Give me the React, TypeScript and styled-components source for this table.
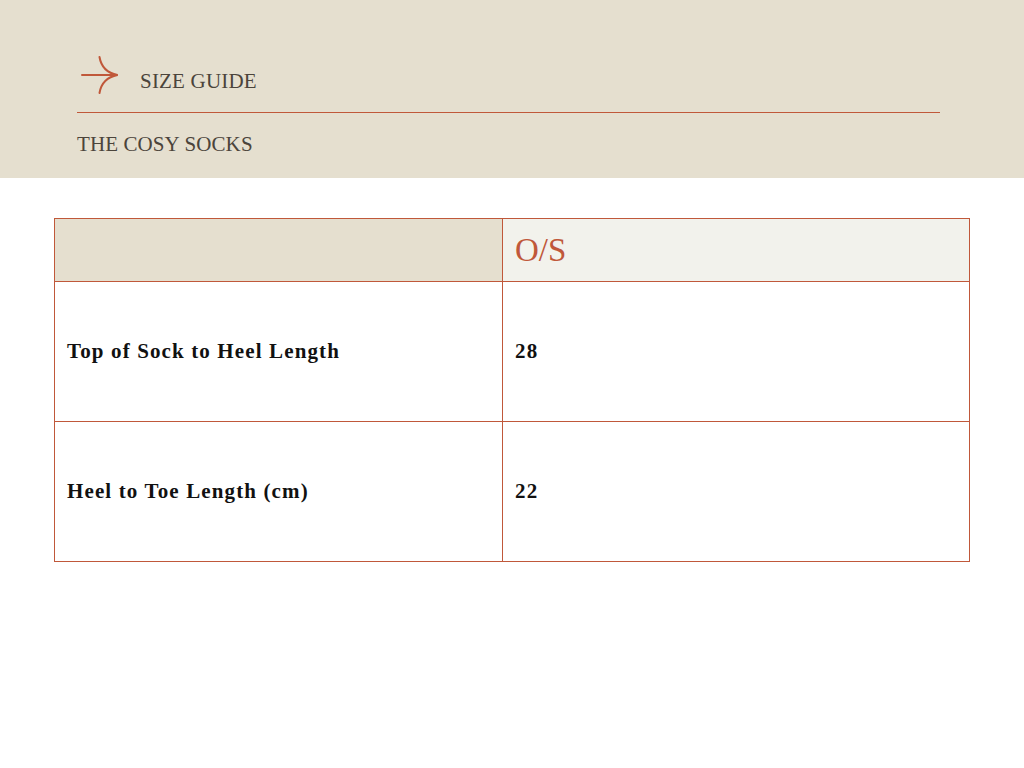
import styled, { createGlobalStyle } from 'styled-components';

const GlobalStyle = createGlobalStyle`
    body {
        margin: 0;
        background: #ffffff;
        font-family: "Liberation Serif", "Times New Roman", serif;
    }
`;

const Header = styled.header`
    box-sizing: border-box;
    height: 178px;
    padding: 55px 84px 0 77px;
    background: #e5dfcf;
`;

const TitleRow = styled.div`
    display: flex;
    align-items: flex-start;
    height: 40px;
    padding-left: 3px;
`;

const Title = styled.div`
    margin-top: 16px;
    margin-left: 20px;
    font-size: 21px;
    line-height: 21px;
    letter-spacing: 0.2px;
    color: #4b443b;
`;

const Rule = styled.div`
    height: 1px;
    margin-top: 17px;
    background: #c0583a;
`;

const Subtitle = styled.div`
    margin-top: 19px;
    font-size: 21px;
    line-height: 24px;
    letter-spacing: 0.1px;
    color: #4b443b;
`;

const Table = styled.table`
    margin: 40px 0 0 54px;
    width: 916px;
    border-collapse: collapse;
    table-layout: fixed;
`;

const HeadCell = styled.th<{ $tone: 'sand' | 'cream' }>`
    height: 62px;
    padding: 0 12px;
    border: 1px solid #c0583a;
    background: ${p => (p.$tone === 'sand' ? '#e5dfcf' : '#f2f2ec')};
    text-align: left;
    font-weight: normal;
    font-size: 33px;
    color: #c0583a;
    vertical-align: middle;
`;

const Cell = styled.td`
    height: 139px;
    padding: 0 12px;
    border: 1px solid #c0583a;
    font-weight: bold;
    font-size: 21px;
    letter-spacing: 1.13px;
    color: #111111;
    vertical-align: middle;
`;

function Arrow() {
    return (
        <svg width="40" height="40" viewBox="0 0 40 40" fill="none" stroke="#c0583a" strokeWidth="2" strokeLinecap="round">
            <path d="M2 20 H37" />
            <path d="M19.5 2 Q22 17 37.5 20 Q22 23 19.5 38" />
        </svg>
    );
}

const rows = [
    { label: 'Top of Sock to Heel Length', value: '28' },
    { label: 'Heel to Toe Length (cm)', value: '22' },
];

function App() {
    return (
        <>
            <GlobalStyle />
            <Header>
                <TitleRow>
                    <Arrow />
                    <Title>SIZE GUIDE</Title>
                </TitleRow>
                <Rule />
                <Subtitle>THE COSY SOCKS</Subtitle>
            </Header>
            <Table>
                <colgroup>
                    <col style={{ width: 448 }} />
                    <col />
                </colgroup>
                <thead>
                    <tr>
                        <HeadCell $tone="sand" />
                        <HeadCell $tone="cream">O/S</HeadCell>
                    </tr>
                </thead>
                <tbody>
                    {rows.map(row => (
                        <tr key={row.label}>
                            <Cell>{row.label}</Cell>
                            <Cell>{row.value}</Cell>
                        </tr>
                    ))}
                </tbody>
            </Table>
        </>
    );
}

export default App;
